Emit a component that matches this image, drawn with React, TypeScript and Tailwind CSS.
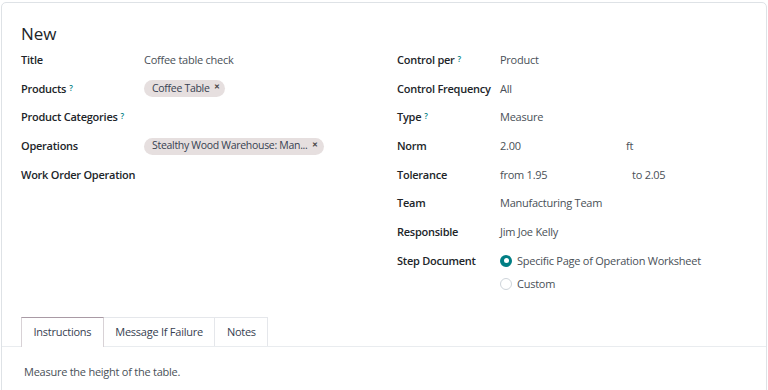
import React from "react";

const Q = () => <sup className="text-[#017e84] text-[8px] ml-[3px] font-semibold relative top-[-2px]">?</sup>;

function Tag({ text, w }: { text: string; w?: string }) {
  return (
    <span className={`inline-flex items-center justify-between h-[17px] rounded-full bg-[#e6dfdf] pl-[8px] pr-[6px] text-[#374151] whitespace-nowrap text-[10.5px] tracking-[-0.3px] ${w ?? ""}`}>
      <span>{text}</span>
      <span className="ml-[4px] text-[7px] font-bold text-[#444] leading-none relative top-[-2px]">✕</span>
    </span>
  );
}

function Row({ label, q, children, lw }: { label: string; q?: boolean; children?: React.ReactNode; lw: string }) {
  return (
    <div className="flex items-center h-[28.65px]">
      <div className={`${lw} shrink-0 font-semibold text-[#212529] whitespace-nowrap`}>
        {label}
        {q && <Q />}
      </div>
      <div className="text-[#495057] flex items-center whitespace-nowrap">{children}</div>
    </div>
  );
}

export default function App() {
  const L = "w-[123px]";
  const R = "w-[103px]";
  return (
    <div className="w-[768px] h-[390px] overflow-hidden bg-white pt-[2px] pl-[1px]" style={{ fontFamily: "'Open Sans', 'Noto Sans', sans-serif" }}>
      <div className="w-[766px] h-[420px] border border-[#dee2e6] rounded-[5px] text-[11px] tracking-[-0.25px] bg-white">
        <div className="pl-[19px] pt-[19px]">
          <div className="text-[17px] font-medium text-[#212529] leading-[24px] tracking-normal">New</div>
          <div className="flex">
            <div className="w-[376px]">
              <Row lw={L} label="Title">Coffee table check</Row>
              <Row lw={L} label="Products" q><Tag text="Coffee Table" /></Row>
              <Row lw={L} label="Product Categories" q />
              <Row lw={L} label="Operations"><Tag text="Stealthy Wood Warehouse: Man..." w="w-[180px] pr-[9px]" /></Row>
              <Row lw={L} label="Work Order Operation" />
            </div>
            <div className="flex-1">
              <Row lw={R} label="Control per" q>Product</Row>
              <Row lw={R} label="Control Frequency">All</Row>
              <Row lw={R} label="Type" q>Measure</Row>
              <Row lw={R} label="Norm"><span className="w-[126px]">2.00</span><span>ft</span></Row>
              <Row lw={R} label="Tolerance"><span className="w-[132px]">from 1.95</span><span>to 2.05</span></Row>
              <Row lw={R} label="Team">Manufacturing Team</Row>
              <Row lw={R} label="Responsible">Jim Joe Kelly</Row>
              <Row lw={R} label="Step Document">
                <span className="w-[12px] h-[12px] rounded-full bg-[#017e84] flex items-center justify-center mr-[5px]">
                  <span className="w-[5px] h-[5px] rounded-full bg-white" />
                </span>
                Specific Page of Operation Worksheet
              </Row>
              <div className="flex items-center h-[18px] pl-[103px] text-[#495057]">
                <span className="w-[12px] h-[12px] rounded-full border border-[#ced4da] mr-[5px]" />
                Custom
              </div>
            </div>
          </div>
        </div>
        <div className="mt-[24px] flex border-b border-[#e9ecef] pl-[19px] h-[30px]">
          <div className="px-[11.5px] flex items-center border-t border-l border-r border-[#d8d2d6] border-t-[#a99aa5] bg-white text-[#374151] mb-[-1px] h-[30px]">Instructions</div>
          <div className="px-[11.5px] flex items-center border-t border-r border-[#e5e7eb] text-[#374151]">Message If Failure</div>
          <div className="px-[11.5px] flex items-center border-t border-r border-[#e5e7eb] text-[#374151]">Notes</div>
        </div>
        <div className="pl-[22px] pt-[17px] text-[#495057]">Measure the height of the table.</div>
      </div>
    </div>
  );
}
